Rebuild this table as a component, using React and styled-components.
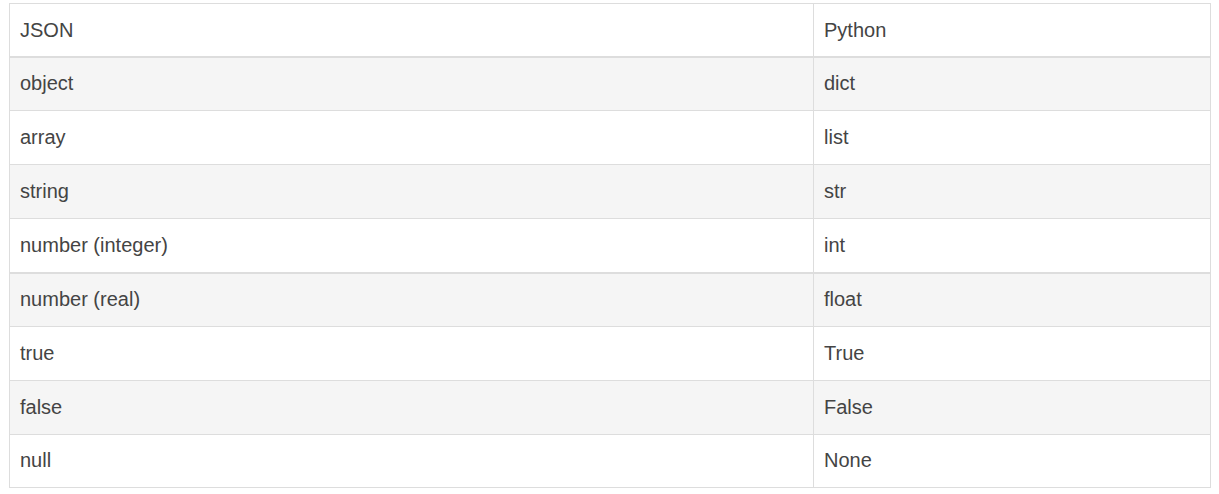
import React from 'react';
import styled, { createGlobalStyle } from 'styled-components';

const GlobalStyle = createGlobalStyle`
  html, body {
    margin: 0;
    padding: 0;
    background: #ffffff;
  }
  body {
    font-family: "Liberation Sans", Arial, sans-serif;
    color: #444444;
  }
`;

const Page = styled.div`
  padding: 3px 8px 0 9px;
`;

const Table = styled.table`
  width: 100%;
  border-collapse: collapse;
  border-spacing: 0;
  table-layout: fixed;
  border: 1px solid #dddddd;
  font-size: 20px;
  line-height: 25.7px;
`;

const Body = styled.tbody`
  & + & {
    border-top: 2px solid #dddddd;
  }
`;

const Row = styled.tr`
  &:nth-of-type(odd) {
    background: ${p => (p.striped ? '#f5f5f5' : 'transparent')};
  }
`;

const HeadCell = styled.th`
  text-align: left;
  font-weight: 400;
  padding: 13.5px 9px 12.5px 10px;
  border: 1px solid #dddddd;
  border-bottom: 2px solid #dddddd;
  vertical-align: bottom;
`;

const Cell = styled.td`
  padding: 13.75px 9px 13.25px 10px;
  border: 1px solid #dddddd;
  vertical-align: top;
`;

const groups = [
  [
    ['object', 'dict'],
    ['array', 'list'],
    ['string', 'str'],
    ['number (integer)', 'int'],
  ],
  [
    ['number (real)', 'float'],
    ['true', 'True'],
    ['false', 'False'],
    ['null', 'None'],
  ],
];

export default function App() {
  return (
    <Page>
      <GlobalStyle />
      <Table>
        <colgroup>
          <col style={{ width: '804px' }} />
          <col />
        </colgroup>
        <thead>
          <tr>
            <HeadCell>JSON</HeadCell>
            <HeadCell>Python</HeadCell>
          </tr>
        </thead>
        {groups.map((rows, i) => (
          <Body key={i}>
            {rows.map(([json, py]) => (
              <Row key={json} striped>
                <Cell>{json}</Cell>
                <Cell>{py}</Cell>
              </Row>
            ))}
          </Body>
        ))}
      </Table>
    </Page>
  );
}
